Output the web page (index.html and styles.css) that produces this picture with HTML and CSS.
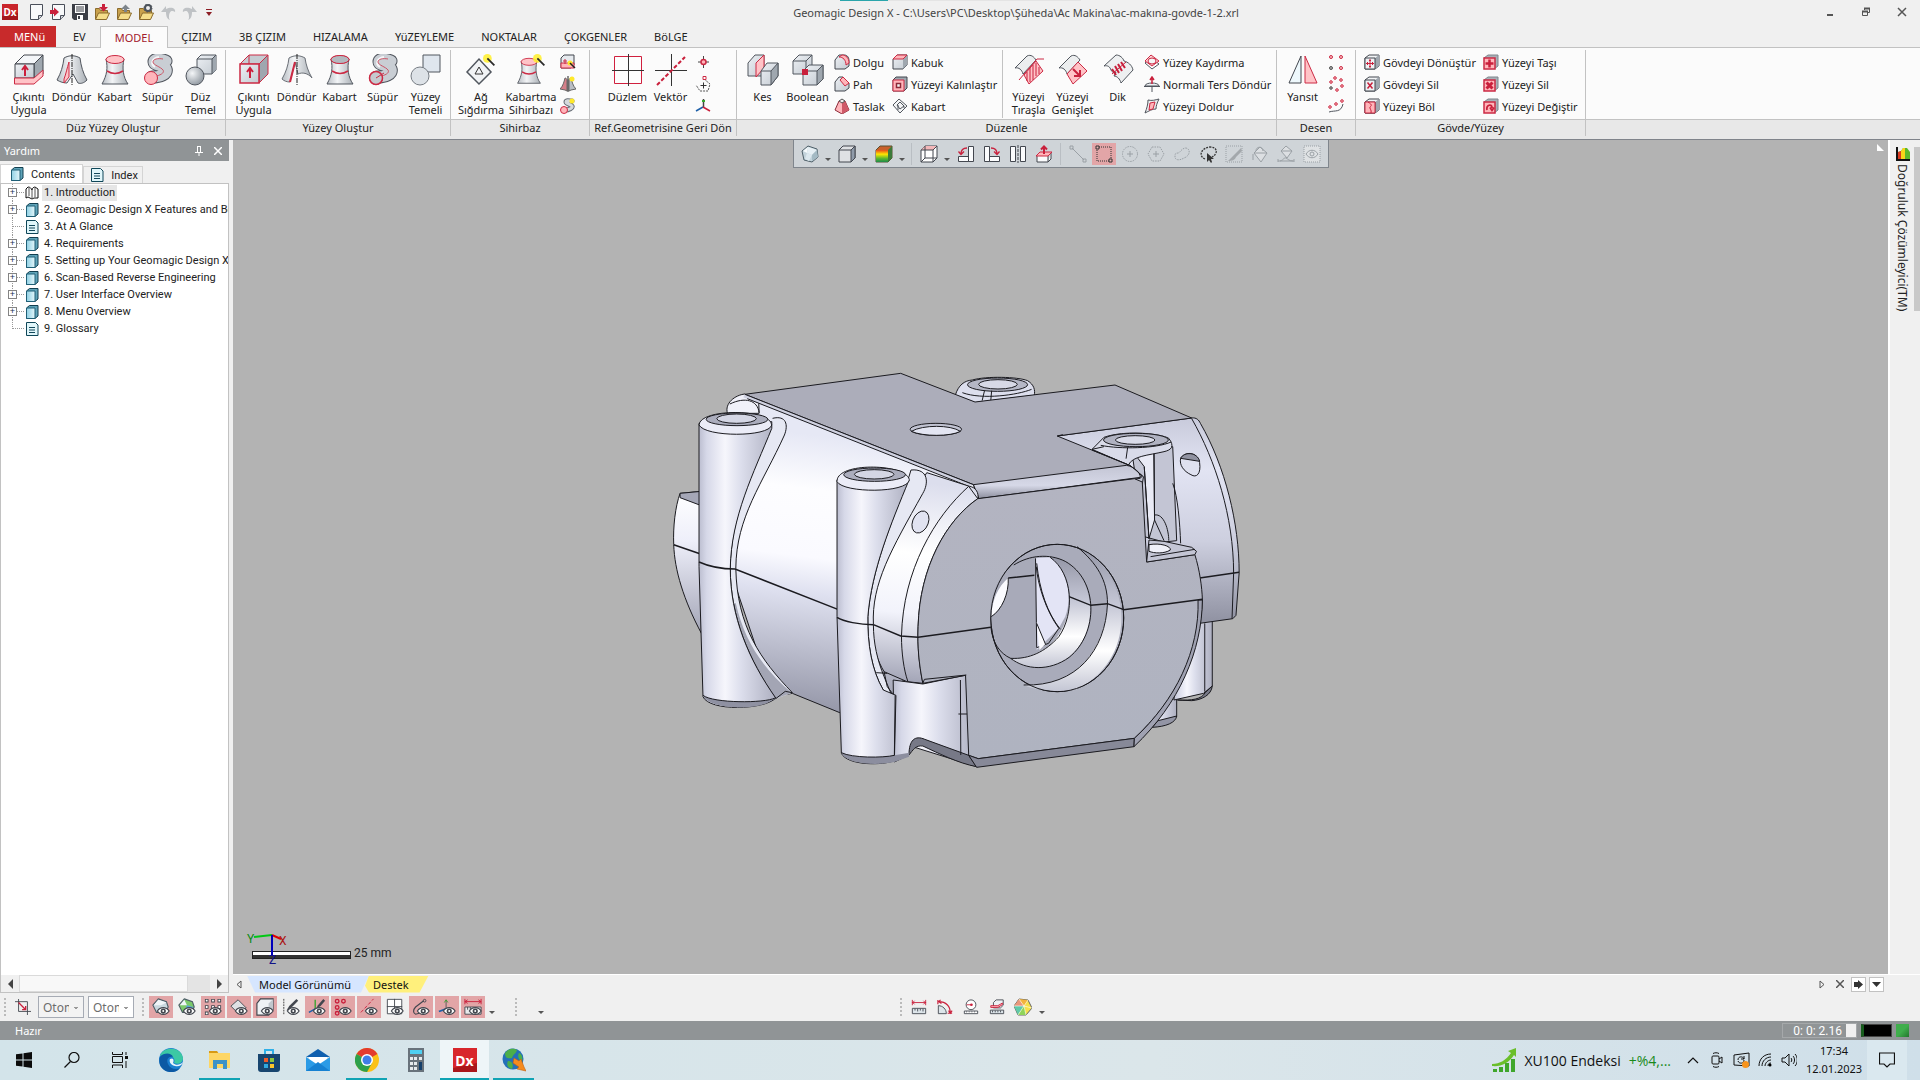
FILE: index.html
```
<!DOCTYPE html>
<html lang="tr">
<head>
  <meta charset="UTF-8" />
  <meta name="viewport" content="width=device-width, initial-scale=1.0" />
  <title>Geomagic Design X</title>
  <link rel="stylesheet" href="styles.css">
</head>
<body>

  <!-- icon sheet -->
  <svg class="sheet" aria-hidden="true">
    <defs>
      <linearGradient id="g-metal" x1="0" y1="0" x2="1" y2="0"><stop offset="0" stop-color="#b9bec4"/><stop offset=".4" stop-color="#f2f4f6"/><stop offset="1" stop-color="#a9afb5"/></linearGradient>
      <linearGradient id="g-face" x1="0" y1="0" x2="1" y2="1"><stop offset="0" stop-color="#eef1f5"/><stop offset="1" stop-color="#c3cad1"/></linearGradient>
      <linearGradient id="g-rain" x1="0" y1="0" x2="0" y2="1"><stop offset="0" stop-color="#e8481c"/><stop offset=".35" stop-color="#ffe600"/><stop offset=".7" stop-color="#5db82c"/><stop offset="1" stop-color="#1f8a4c"/></linearGradient>
      <radialGradient id="g-ball" cx=".35" cy=".35" r=".7"><stop offset="0" stop-color="#f4f6f8"/><stop offset="1" stop-color="#8f979f"/></radialGradient>
      <linearGradient id="g-book" x1="0" y1="0" x2="1" y2="0"><stop offset="0" stop-color="#8fd0e4"/><stop offset="1" stop-color="#e4f7fb"/></linearGradient>
    </defs>

    <symbol id="dx" viewBox="0 0 16 16"><path fill="#c9252b" d="M0 0h16v16H0z"/><path fill="#a5161c" d="M0 12l16-3v7H0z"/></symbol>
    <symbol id="page" viewBox="0 0 16 16"><path d="M2.500.5h12v11l-4 4h-8z" fill="#f8f9fa" stroke="#4a4f5a"/><path d="M14 11.500h-3.500v4" fill="#cfd3d8" stroke="#4a4f5a"/></symbol>
    <symbol id="page-in" viewBox="0 0 16 16"><use href="#page"/><path d="M0 6h4V3.500L9 8l-5 4.500V10H0z" fill="#c9203c"/></symbol>
    <symbol id="save" viewBox="0 0 16 16"><path d="M0 0h16v16H2l-2-2z" fill="#3b3e46"/><path fill="#fff" d="M3 1h10v8H3zM5 11h6v5H5z"/><path d="M4 3h8M4 5h8M4 7h8" stroke="#3b3e46"/><path fill="#3b3e46" d="M6 12h2v3H6z"/></symbol>
    <symbol id="folder" viewBox="0 0 16 16"><path d="M1.500 15V4.500h4l1 2h7V9" fill="#c9a14c" stroke="#8a6a2c"/><path d="M1.500 15.500L4.500 9h11l-3 6.500z" fill="#f5dd8a" stroke="#8a6a2c"/></symbol>
    <symbol id="folder-down" viewBox="0 0 16 16"><use href="#folder"/><path d="M8 0h3v3h3L9.500 7.500 5 3h3z" fill="#c9203c"/></symbol>
    <symbol id="folder-up" viewBox="0 0 16 16"><use href="#folder"/><path d="M8 8h3V5h3L9.500.5 5 5h3z" fill="#7d848b"/></symbol>
    <symbol id="folder-gear" viewBox="0 0 16 16"><use href="#folder"/><circle cx="10" cy="4" r="3" fill="none" stroke="#4d535b" stroke-width="2"/><circle cx="10" cy="4" r="4" fill="none" stroke="#4d535b" stroke-dasharray="1.500 1.600"/></symbol>
    <symbol id="undo" viewBox="0 0 16 16"><path d="M1 8l5-6v3c6-3 10 0 9 3-3-2-6-1-6 5 0 1 0 2 1 3-3-1-4-4-4-8z" fill="#bfc2c5"/></symbol>
    <symbol id="redo" viewBox="0 0 16 16"><path d="M15 8l-5-6v3C4 2 0 5 1 8c3-2 6-1 6 5 0 1 0 2-1 3 3-1 4-4 4-8z" fill="#bfc2c5"/></symbol>

    <!-- 32px ribbon icons -->
    <symbol id="extrude" viewBox="0 0 32 32"><path d="M2 10L11 1h19l-9 9z" fill="#f4f6f9" stroke="#43474f"/><path d="M21 10l9-9v19l-9 9z" fill="#9fa7af" stroke="#43474f"/><path d="M2 10h19v14H2z" fill="url(#g-face)" stroke="#43474f"/><path d="M1.500 24H21l9-8v6l-9 8H1.500z" fill="#ffc3c7" stroke="#cc2a44"/><path d="M12 22v-9M9 16l3-4 3 4" fill="none" stroke="#cc1f3c" stroke-width="2"/></symbol>
    <symbol id="extrude-s" viewBox="0 0 32 32"><path d="M2 10L11 1h19l-9 9z" fill="#c5ccd2" stroke="#cc2a44"/><path d="M11 1v9" stroke="#cc2a44"/><path d="M21 10l9-9v19l-9 9z" fill="#9fa7af" stroke="#cc2a44"/><path d="M2 10h19v19H2z" fill="url(#g-face)" stroke="#cc2a44" stroke-width="1.500"/><path d="M12 24v-9M9 18l3-4 3 4" fill="none" stroke="#cc1f3c" stroke-width="2"/></symbol>
    <symbol id="revolve" viewBox="0 0 32 32"><path d="M8 4c5-3 11-3 16 0 1 8 3 15 7 22-3 3-6 4-9 3l-5-9-6 9c-3 0-7-1-10-3 4-7 6-14 7-22z" fill="url(#g-metal)" stroke="#51565e"/><path d="M13 8v15l-5 6V25c2-5 3-11 5-17z" fill="#ffc3c7" stroke="#cc2a44"/><path d="M16 0v32" stroke="#222" stroke-dasharray="5 1 1 1"/></symbol>
    <symbol id="revolve-s" viewBox="0 0 32 32"><path d="M8 4c5-3 11-3 16 0 1 7 3 13 7 20-4-5-10-6-14-4l-3-12-5 20c-3 0-6-1-8-3 4-7 6-13 7-21z" fill="url(#g-metal)" stroke="#6a6f76"/><path d="M14 8L9 28" stroke="#cc2a44" stroke-width="2"/><path d="M16 0v32" stroke="#222" stroke-dasharray="5 1 1 1"/></symbol>
    <symbol id="loft" viewBox="0 0 32 32"><path d="M7 5c2 9 1 16-4 25h26c-5-7-6-16-4-25z" fill="url(#g-metal)" stroke="#51565e"/><path d="M8 17c5 3 11 3 16 0" fill="none" stroke="#cc2a44" stroke-width="1.500"/><ellipse cx="16" cy="5.500" rx="9" ry="4" fill="#ffc3c7" stroke="#cc2a44"/></symbol>
    <symbol id="loft-s" viewBox="0 0 32 32"><use href="#loft"/><ellipse cx="16" cy="5.500" rx="9" ry="4" fill="#b3b9bf" stroke="#cc2a44"/></symbol>
    <symbol id="sweep" viewBox="0 0 32 32"><path d="M10 23c8 0 16-3 14-8S12 12 12 8s7-3 12-1" fill="none" stroke="#51565e" stroke-width="13" stroke-linecap="round"/><path d="M10 23c8 0 16-3 14-8S12 12 12 8s7-3 12-1" fill="none" stroke="#c9ced4" stroke-width="11" stroke-linecap="round"/><path d="M13 13c-5-3-3-9 4-10" fill="none" stroke="#f4f6f8" stroke-width="2"/><path d="M9 23c9-1 14-4 12-7S11 11 11 8s5-4 10-3" fill="none" stroke="#cc5566"/><circle cx="9" cy="24" r="6.500" fill="#ffb5ba" stroke="#cc2a44"/></symbol>
    <symbol id="sweep-s" viewBox="0 0 32 32"><use href="#sweep"/><circle cx="9" cy="24" r="6.500" fill="#c5c9ce" stroke="#cc2a44" stroke-width="1.500"/><path d="M9 24l8-5" stroke="#cc2a44"/></symbol>
    <symbol id="solid" viewBox="0 0 32 32"><path d="M12 5l4-4h15v15l-4 4H12z" fill="url(#g-face)" stroke="#51565e"/><path d="M27 5l4-4v15l-4 4z" fill="#9fa7af"/><path d="M12 5h15v15M27 5l4-4" fill="none" stroke="#51565e"/><circle cx="10" cy="22" r="9" fill="url(#g-ball)" stroke="#51565e"/></symbol>
    <symbol id="surf" viewBox="0 0 32 32"><path d="M13 1h17v17H13z" fill="#dfe6ee" stroke="#51565e"/><circle cx="10" cy="22" r="9" fill="#dde2e7" stroke="#777d84"/></symbol>
    <symbol id="wand" viewBox="0 0 16 16"><circle cx="5" cy="5" r="5" fill="#fff02a" opacity=".85"/><path d="M5 5l8 8" stroke="#2b2b2b" stroke-width="2"/></symbol>
    <symbol id="meshfit" viewBox="0 0 32 32"><path d="M2 18L14 5l12 13-12 12z" fill="#f1f3f5" stroke="#51565e" stroke-width="1.500"/><path d="M14 13l4 7h-8z" fill="none" stroke="#333"/><use href="#wand" x="18" y="0" width="14" height="14"/></symbol>
    <symbol id="loftwiz" viewBox="0 0 32 32"><use href="#loft" y="2" width="28" height="30"/><use href="#wand" x="18" y="0" width="14" height="14"/></symbol>
    <symbol id="plane" viewBox="0 0 32 32"><path d="M2.500 2.500h27v27h-27z" fill="#fdfdfd" stroke="#d0203e"/><path d="M0 16.500h32M16.500 0v32" stroke="#333"/></symbol>
    <symbol id="vector" viewBox="0 0 32 32"><path d="M0 16.500h32M16.500 0v32" stroke="#333"/><path d="M2 31L30 3" stroke="#c9203c" stroke-width="2" stroke-dasharray="4 2"/></symbol>
    <symbol id="cut" viewBox="0 0 32 32"><path d="M1 9l7-8h9v21H1z" fill="url(#g-face)" stroke="#51565e"/><path d="M9 9l8-8v13l-8 9z" fill="#ffc3c7" stroke="#cc2a44"/><path d="M14 17l6-8h11v13l-7 9H14z" fill="url(#g-face)" stroke="#51565e"/><path d="M24 17l7-8v13l-7 9z" fill="#9fa7af" stroke="#51565e"/><path d="M14 17h10" stroke="#51565e"/></symbol>
    <symbol id="bool" viewBox="0 0 32 32"><path d="M1 7l6-6h13v14l-5 5H1z" fill="url(#g-face)" stroke="#51565e"/><path d="M1 7h13v13M14 7l6-6" fill="none" stroke="#51565e"/><path d="M11 17l6-6h14v14l-6 6H11z" fill="url(#g-face)" stroke="#51565e"/><path d="M25 17l6-6v14l-6 6z" fill="#9fa7af" stroke="#51565e"/><path d="M11 17h14" stroke="#51565e"/><path fill="#c9203c" d="M10 15h6v6h-6z"/></symbol>
    <symbol id="trim" viewBox="0 0 32 32"><path d="M2 14L14 2c4-2 7 1 9 4L10 20C9 16 6 13 2 14z" fill="#eceeef" stroke="#51565e"/><path d="M11 21L23 7l7 10-14 13z" fill="#ffc3c7" stroke="#cc2a44"/><path d="M14 18v9M17 14v14M20 11v15M23 9v13M26 13v7" stroke="#c9203c"/><path d="M6 26L24 5h7" fill="none" stroke="#cc2a44"/></symbol>
    <symbol id="extend" viewBox="0 0 32 32"><path d="M2 14L14 2c4-2 7 1 9 4L10 20C9 16 6 13 2 14z" fill="#eceeef" stroke="#51565e"/><path d="M10 20L21 8l9 9-14 13z" fill="#ffc3c7" stroke="#cc2a44"/><path d="M16 15l7 7M23 16v6h-6" fill="none" stroke="#c9203c" stroke-width="2"/></symbol>
    <symbol id="sew" viewBox="0 0 32 32"><path d="M2 12L14 1c4 0 7 3 8 6 4 1 8 4 9 9L19 29c-1-4-4-7-7-7l2-4c-3 1-4 0-5-2-1-3-3-5-7-4z" fill="#eef0f1" stroke="#51565e"/><path d="M10 15l4 6M13 12l4 7M16 10l4 7M19 8l4 6" stroke="#c9203c" stroke-width="2"/><path d="M10 20L24 8" stroke="#c9203c"/></symbol>
    <symbol id="mirror" viewBox="0 0 32 32"><path d="M14 2v27H2z" fill="#eef8fc" stroke="#43474f"/><path d="M18 2v27h12z" fill="#ffc3c7" stroke="#cc2a44"/></symbol>

    <!-- 16px icons -->
    <symbol id="s-ext" viewBox="0 0 16 16"><path d="M1 4l3-3h10v10l-3 3H1z" fill="#e6eaee" stroke="#43474f"/><path d="M1 9h13v5H1z" fill="#ffb5ba" stroke="#cc2a44"/><path d="M5 10V5M3 7h4" stroke="#cc2a44"/><circle cx="10" cy="9" r="2.500" fill="#ffe92a"/><path d="M10 9l5 5" stroke="#222" stroke-width="1.500"/></symbol>
    <symbol id="s-rev" viewBox="0 0 16 16"><path d="M5 2c1 0 2 1 2 2v11l-2-1-5-1c3-3 4-7 5-11z" fill="#d4808a" stroke="#666"/><path d="M11 2c-1 0-2 1-2 2v11l2-1 5-1c-3-3-4-7-5-11z" fill="#b9bec4" stroke="#666"/><path d="M8 0v16" stroke="#222"/><circle cx="12" cy="3" r="2.500" fill="#ffe92a"/></symbol>
    <symbol id="s-swp" viewBox="0 0 16 16"><path d="M5 12c4 0 8-2 7-4S6 6 6 4s4-1 6-1" fill="none" stroke="#6a7077" stroke-width="5" stroke-linecap="round"/><path d="M5 12c4 0 8-2 7-4S6 6 6 4s4-1 6-1" fill="none" stroke="#d5d9dd" stroke-width="3"/><circle cx="4" cy="12" r="3.500" fill="#ffb5ba" stroke="#cc2a44"/><circle cx="12" cy="3" r="2.500" fill="#ffe92a"/></symbol>
    <symbol id="s-pt" viewBox="0 0 16 16"><path d="M3 8h11M8.500 2v12" stroke="#444"/><circle cx="8.500" cy="8" r="2.500" fill="#ffb5ba" stroke="#cc2a44" stroke-width="1.500"/></symbol>
    <symbol id="s-poly" viewBox="0 0 16 16"><path d="M9 3l6 5-2 7H5L1 9" fill="none" stroke="#555" stroke-dasharray="2 1"/><path d="M5.500 9.500h6M8.500 6.500v6" stroke="#333"/><path d="M8 .5h3v3H8z" fill="#fff" stroke="#cc2a44"/></symbol>
    <symbol id="s-axis" viewBox="0 0 16 16"><path d="M8.500 9V1" stroke="#444" stroke-width="1.500"/><path d="M7 3h3" stroke="#36a52c" stroke-width="2"/><path d="M8 9l-7 4" stroke="#1d5fa8" stroke-width="1.500"/><path d="M8 9l7 4" stroke="#c9203c" stroke-width="1.500"/></symbol>
    <symbol id="s-fillet" viewBox="0 0 16 16"><path d="M1 6l4-5h5c4 0 5 3 5 6v5l-4 3H1z" fill="url(#g-face)" stroke="#43474f"/><path d="M5 3l3-2c4 0 7 3 7 8l-3 2c0-5-3-8-7-8z" fill="#ffb5ba" stroke="#cc2a44"/></symbol>
    <symbol id="s-chamfer" viewBox="0 0 16 16"><path d="M1 6l4-5h4l6 6v5l-4 3H1z" fill="url(#g-face)" stroke="#43474f"/><path d="M6 4l3-3 6 6-4 3z" fill="#ffb5ba" stroke="#cc2a44"/></symbol>
    <symbol id="s-draft" viewBox="0 0 16 16"><path d="M5 3h6l4 9-7 4-7-4z" fill="#ffb5ba" stroke="#8c2a38"/><path d="M8 5l3-2 4 9-7 4z" fill="#cf5a68"/><path d="M5 3l3-2 3 2-3 2z" fill="#eee" stroke="#555"/></symbol>
    <symbol id="s-shell" viewBox="0 0 16 16"><path d="M1 5l4-4h10v10l-4 4H1z" fill="url(#g-face)" stroke="#43474f"/><path d="M11 5l4-4v10l-4 4z" fill="#9fa7af"/><path d="M1 5l4-4h10l-4 4z" fill="#ffb5ba" stroke="#cc2a44"/></symbol>
    <symbol id="s-thick" viewBox="0 0 16 16"><path d="M1 4l3-3h11v11l-3 3H1z" fill="#9fa7af" stroke="#43474f"/><path d="M1 4h11v11H1z" fill="#ffb5ba" stroke="#cc2a44"/><path d="M4.500 7.500h4v4h-4z" fill="#f4f4f4" stroke="#8c2a38" stroke-width="1.500"/></symbol>
    <symbol id="s-emb" viewBox="0 0 16 16"><path d="M1 7l6-6 8 7-7 7z" fill="#f4f5f6" stroke="#51565e"/><path d="M5 7l3-3 4 4-4 3zM6 7v5M12 8v2" fill="none" stroke="#51565e"/></symbol>
    <symbol id="s-offset" viewBox="0 0 16 16"><path d="M1 9l6-5 8 6-7 5z" fill="#fff" stroke="#51565e"/><path d="M1 7l6-6 8 6-7 5z" fill="#ffd3d6" stroke="#cc2a44"/><ellipse cx="8" cy="7" rx="4" ry="3" fill="#f4f4f4" stroke="#cc2a44"/></symbol>
    <symbol id="s-normal" viewBox="0 0 16 16"><path d="M1 10c0-4 14-4 14 0z" fill="#eef1f4" stroke="#51565e"/><path d="M0 10.500h16M8 16v-6" stroke="#51565e"/><path d="M8 8V2M6 4l2-3 2 3" stroke="#c9203c" fill="none" stroke-width="1.500"/></symbol>
    <symbol id="s-fill" viewBox="0 0 16 16"><path d="M4 2c4 1 7 0 11-1-2 4-3 7-3 10-4 0-7 2-11 4 2-5 3-9 3-13z" fill="#eceeef" stroke="#51565e"/><path d="M6 5l5-1-2 7-4 1z" fill="#ffb5ba" stroke="#cc2a44"/></symbol>
    <symbol id="s-lin" viewBox="0 0 16 16"><g fill="#ffc3c7" stroke="#cc2a44"><circle cx="3" cy="3" r="1.500"/><circle cx="13" cy="3" r="1.500"/><circle cx="13" cy="14" r="1.500"/></g><circle cx="3" cy="14" r="1.500" fill="#aaa" stroke="#555"/></symbol>
    <symbol id="s-circ" viewBox="0 0 16 16"><g fill="#ffc3c7" stroke="#cc2a44"><circle cx="3" cy="6" r="1.300"/><circle cx="7" cy="2" r="1.300"/><circle cx="13" cy="4" r="1.300"/><circle cx="14" cy="10" r="1.300"/><circle cx="9" cy="14" r="1.300"/></g><circle cx="3" cy="12" r="1.300" fill="#aaa" stroke="#555"/></symbol>
    <symbol id="s-curve" viewBox="0 0 16 16"><path d="M1 14c6-2 12 1 14-8" fill="none" stroke="#51565e"/><g fill="#ffc3c7" stroke="#cc2a44"><circle cx="2" cy="9" r="1.300"/><circle cx="8" cy="6" r="1.300"/><circle cx="14" cy="3" r="1.300"/></g></symbol>
    <symbol id="b-box" viewBox="0 0 16 16"><path d="M1 4l4-3h10v11l-4 3H1z" fill="#f2f4f6" stroke="#43474f"/><path d="M11 4l4-3v11l-4 3z" fill="#9fa7af"/><path d="M1 4h10v11H1z" fill="#eef1f4" stroke="#43474f"/></symbol>
    <symbol id="b-pink" viewBox="0 0 16 16"><path d="M1 4l4-3h10v11l-4 3z" fill="#a9b0b7" stroke="#7e868d"/><path d="M1 4h11v11H1z" fill="#ffb5ba" stroke="#cc2a44" stroke-width="1.500"/></symbol>
    <symbol id="s-bmove" viewBox="0 0 16 16"><use href="#b-box"/><path d="M6 5v9M2 9.500h8M5 6.500h2M5 12.500h2M3.500 8v3M8.500 8v3" stroke="#c9203c"/></symbol>
    <symbol id="s-bdel" viewBox="0 0 16 16"><use href="#b-box"/><path d="M3.500 6.500l5 6M8.500 6.500l-5 6" stroke="#c9203c" stroke-width="1.500"/></symbol>
    <symbol id="s-split" viewBox="0 0 16 16"><use href="#b-box"/><path d="M1 4h10v11H1z" fill="#ffb5ba" stroke="#cc2a44"/><path d="M4 4c5 3 3 4 2 5s2 3 1 6" fill="none" stroke="#c9203c"/></symbol>
    <symbol id="s-fmove" viewBox="0 0 16 16"><use href="#b-pink"/><path d="M6.500 5.500v8M2.500 9.500h8" stroke="#c9203c" stroke-width="2.500"/></symbol>
    <symbol id="s-fdel" viewBox="0 0 16 16"><use href="#b-pink"/><path d="M3.500 6.500l6 6M9.500 6.500l-6 6" stroke="#c9203c" stroke-width="3"/></symbol>
    <symbol id="s-frep" viewBox="0 0 16 16"><use href="#b-pink"/><path d="M4 12c-1-5 5-7 5-2M7 9.500l2 3 2-3" fill="none" stroke="#c9203c" stroke-width="1.800"/></symbol>

    <!-- view bar -->
    <symbol id="v-poly" viewBox="0 0 18 18"><path d="M7 1l9 3 1 8-6 5-8-2-2-9z" fill="#c3d3db" stroke="#4e5f68"/><path d="M7 2l-1 6-4-2z" fill="#f6fafc"/><path d="M7 2l9 3-5 5-5-2z" fill="#e6eff4"/><path d="M6 8l5 2-3 6-4-2z" fill="#dce8ee"/><path d="M11 10l5-5 1 7-6 4z" fill="#a4bac4"/></symbol>
    <symbol id="v-cube" viewBox="0 0 18 18"><path d="M1 5l4-4h12v12l-4 4H1z" fill="#dfe1e4" stroke="#43474f"/><path d="M13 5l4-4v12l-4 4z" fill="#8f9baa" stroke="#43474f"/><path d="M1 5h12" stroke="#43474f"/></symbol>
    <symbol id="v-rain" viewBox="0 0 18 18"><path d="M1 5l4-4h12v12l-4 4H1z" fill="#c9602a" stroke="#5a5030"/><path d="M1 5h12v12H1z" fill="url(#g-rain)"/><path d="M13 5l4-4v12l-4 4z" fill="#3c7a3a"/></symbol>
    <symbol id="v-wire" viewBox="0 0 18 18"><path d="M1 5l4-4h12v12l-4 4H1z" fill="#fff" stroke="#43474f"/><path d="M1 5h12L17 1H5z" fill="#f3b7b9"/><path d="M1 5h12v12M13 5l4-4M5 1v12h12M5 13l-4 4" fill="none" stroke="#43474f"/></symbol>
    <symbol id="v-rotl" viewBox="0 0 18 18"><path d="M11.500 1.500h5v15h-5zM1.500 11.500h10v5h-10z" fill="#fbfcfd" stroke="#43474f"/><path d="M10 3C6 3 4 5 4 9M1.500 6.500L4 9.500l3-3" fill="none" stroke="#c9203c" stroke-width="1.300"/></symbol>
    <symbol id="v-rotr" viewBox="0 0 18 18"><path d="M1.500 1.500h5v15h-5zM6.500 11.500h10v5h-10z" fill="#fbfcfd" stroke="#43474f"/><path d="M8 3c4 0 6 2 6 6M11 6.500l3 3 2.500-3" fill="none" stroke="#c9203c" stroke-width="1.300"/></symbol>
    <symbol id="v-flip" viewBox="0 0 18 18"><path d="M1.500 1.500h5v15h-5zM11.500 1.500h5v15h-5z" fill="#fbfcfd" stroke="#43474f"/><path d="M9 0v18" stroke="#43474f" stroke-dasharray="3 1"/></symbol>
    <symbol id="v-up" viewBox="0 0 18 18"><path d="M2 11v6h11v-6M13 17l3-3V8" fill="#fbfcfd" stroke="#43474f"/><path d="M1 11l4-4h12l-4 4z" fill="#ffb5ba" stroke="#cc2a44"/><path d="M9 9V3M6 4.500l3-3 3 3" fill="none" stroke="#c9203c" stroke-width="2"/></symbol>
    <symbol id="v-line" viewBox="0 0 18 18"><path d="M3 3l12 12" stroke="#9aa0a5"/><path d="M1 1h3v3H1zM14 14h3v3h-3z" fill="none" stroke="#9aa0a5"/></symbol>
    <symbol id="v-rect" viewBox="0 0 18 18"><path d="M2 2h14v14H2z" fill="none" stroke="#333" stroke-dasharray="1 1"/><path d="M1 1h3v3H1zM14 14h3v3h-3z" fill="#e8b0b0" stroke="#333"/></symbol>
    <symbol id="v-circ" viewBox="0 0 18 18"><circle cx="9" cy="9" r="7.500" fill="none" stroke="#9aa0a5" stroke-dasharray="1.500 1"/><path d="M6 9h6M9 6v6" stroke="#9aa0a5"/></symbol>
    <symbol id="v-hex" viewBox="0 0 18 18"><path d="M5 2h8l4 7-4 7H5L1 9z" fill="none" stroke="#9aa0a5" stroke-dasharray="1.500 1"/><path d="M6 9h6M9 6v6" stroke="#9aa0a5"/></symbol>
    <symbol id="v-free" viewBox="0 0 18 18"><path d="M4 8c3 1 4-5 9-5 5 1 4 8-2 10-5 3-9 2-9-1 0-2 0-4 2-4z" fill="none" stroke="#9aa0a5" stroke-dasharray="1.500 1"/></symbol>
    <symbol id="v-lasso" viewBox="0 0 18 18"><path d="M6 14c-7-3-4-11 5-12 8 0 8 7 2 10" fill="none" stroke="#333" stroke-width="1.300" stroke-dasharray="2 1"/><path d="M8 8v9l2-2 2 3 1-1-1-3h3z" fill="#333"/></symbol>
    <symbol id="v-brush" viewBox="0 0 18 18"><path d="M1 1h16v16H1z" fill="none" stroke="#9aa0a5" stroke-dasharray="1 1"/><path d="M16 3L8 11l-5 5c4 0 7-1 8-4l6-6z" fill="#a3a8ac"/></symbol>
    <symbol id="v-fill" viewBox="0 0 18 18"><path d="M3 8l6-6 7 6-6 9z" fill="#dcdfe2" stroke="#9aa0a5"/><path d="M3 8h13M5 6c0-5 7-5 7 0M2 9v6" fill="none" stroke="#9aa0a5"/></symbol>
    <symbol id="v-fill2" viewBox="0 0 18 18"><path d="M4 6l5-5 6 5-5 7z" fill="#dcdfe2" stroke="#9aa0a5"/><path d="M4 6h11M1 16h16M3 16c4-1 4-4 6-3s3 3 7 3M1 14v3M17 14v3" fill="none" stroke="#9aa0a5"/></symbol>
    <symbol id="v-eye" viewBox="0 0 18 18"><path d="M1 1h16v16H1z" fill="#dfe2e4" stroke="#9aa0a5" stroke-dasharray="1 1"/><path d="M3 9c3-5 9-5 12 0-3 5-9 5-12 0z" fill="none" stroke="#9aa0a5"/><circle cx="9" cy="9" r="2" fill="none" stroke="#9aa0a5"/></symbol>

    <!-- visibility bar -->
    <symbol id="eye" viewBox="0 0 20 20"><path d="M6 14.500c3-5 10-5 13 0-3 5-10 5-13 0z" fill="#fff" stroke="#43474f" stroke-width="1.300"/><circle cx="12.500" cy="14.500" r="2" fill="#fff" stroke="#43474f" stroke-width="1.800"/></symbol>
    <symbol id="e-mesh" viewBox="0 0 20 20"><path d="M7 1l9 3 2 6-3 6H5L1 8z" fill="#c9d8df" stroke="#4e5f68" stroke-width="1.300"/><path d="M7 2l3 6-8 0zM10 8l6-3-9-3z" fill="#eff5f8"/><use href="#eye"/></symbol>
    <symbol id="e-reg" viewBox="0 0 20 20"><path d="M7 1l9 3 2 6-3 6H5L1 8z" fill="#7bc96a" stroke="#4e5f68" stroke-width="1.300"/><path d="M7 2l3 6-8 0z" fill="#eff5f8"/><path d="M10 8l7 2-3 5-6-2z" fill="#5aa2d8"/><use href="#eye"/></symbol>
    <symbol id="e-cloud" viewBox="0 0 20 20"><path d="M1 3h4M8 3h4M15 3h4M1 10h4M8 10h4M15 10h4M1 17h4" stroke="#43474f" stroke-width="4"/><path d="M2 3h2M9 3h2M16 3h2M2 10h2M9 10h2M16 10h2M2 17h2" stroke="#fff" stroke-width="2"/><use href="#eye"/></symbol>
    <symbol id="e-surf" viewBox="0 0 20 20"><path d="M1 9l8-7 9 9-9 6z" fill="#dfe1e4" stroke="#43474f"/><use href="#eye"/></symbol>
    <symbol id="e-body" viewBox="0 0 20 20"><path d="M1 6l4-5h14v12l-5 6H1z" fill="#eef1f4" stroke="#43474f" stroke-width="1.300"/><path d="M14 6l5-5v12l-5 6z" fill="#c1c7cd"/><use href="#eye"/></symbol>
    <symbol id="e-sk" viewBox="0 0 20 20"><path d="M2 1v18" stroke="#333" stroke-dasharray="2 1"/><path d="M16 1L8 9l-3 5 5-3 8-8z" fill="#43474f"/><use href="#eye"/></symbol>
    <symbol id="e-sk3" viewBox="0 0 20 20"><path d="M8 12V2" stroke="#36a52c" stroke-width="1.500"/><path d="M8 12l-7 4" stroke="#1d5fa8" stroke-width="1.500"/><path d="M17 1l-6 7-2 4 5-3 5-6z" fill="#43474f"/><use href="#eye"/></symbol>
    <symbol id="e-pt" viewBox="0 0 20 20"><g fill="none" stroke="#c9203c" stroke-width="1.500"><circle cx="3.500" cy="3.500" r="2"/><circle cx="10.500" cy="3.500" r="2"/><circle cx="3.500" cy="10.500" r="2"/><circle cx="3.500" cy="17" r="2"/></g><use href="#eye"/></symbol>
    <symbol id="e-line" viewBox="0 0 20 20"><path d="M1 16L15 1" stroke="#c9203c" stroke-dasharray="4 2"/><use href="#eye"/></symbol>
    <symbol id="e-plane" viewBox="0 0 20 20"><path d="M1.500 1.500h16v16h-16zM9.500 1v17M1 9.500h17" fill="#fff" stroke="#43474f"/><use href="#eye"/></symbol>
    <symbol id="e-curve" viewBox="0 0 20 20"><path d="M13 3L4 10c-3 3-3 7 0 8l4-1" fill="none" stroke="#43474f" stroke-width="1.300"/><circle cx="14" cy="3" r="1.500" fill="none" stroke="#43474f"/><use href="#eye"/></symbol>
    <symbol id="e-ax" viewBox="0 0 20 20"><path d="M9 12V2" stroke="#555"/><path d="M7 5l2-3 2 3" stroke="#36a52c" fill="none"/><path d="M9 12l-8 3" stroke="#1d5fa8" stroke-width="2"/><use href="#eye"/></symbol>
    <symbol id="e-dim" viewBox="0 0 20 20"><path d="M1 4h18M1 1v6M19 1v6M4 2L1 4l3 2M16 2l3 2-3 2" fill="none" stroke="#c9203c"/><path d="M1 10h18v8H1z" fill="#e8eaec" stroke="#43474f"/><path d="M4 10v3M7 10v3" stroke="#43474f"/><use href="#eye"/></symbol>
    <symbol id="m-fit" viewBox="0 0 18 18"><path d="M4 0v14h14M0 3h14v15" fill="none" stroke="#43474f"/><path d="M4 4l8 8M12 8v4H8" fill="none" stroke="#c9203c" stroke-width="1.500"/></symbol>
    <symbol id="m-dim" viewBox="0 0 18 18"><path d="M1 4h16M1.500 1v6M16.500 1v6M4 2L2 4l2 2M14 2l2 2-2 2" fill="none" stroke="#c9203c"/><path d="M1.500 10.500h15v6h-15z" fill="#dde5ea" stroke="#43474f"/><path d="M4.500 11v2M7.500 11v3M10.500 11v2M13.500 11v3" stroke="#43474f"/></symbol>
    <symbol id="m-ang" viewBox="0 0 18 18"><path d="M1.500 16.500v-9c5 0 9 4 9 9z" fill="#dde5ea" stroke="#43474f"/><path d="M2 3c8 0 13 5 13 13M1 1v5M4 1L2 3l3 2M12 16h5M13 13l2 3 2-3" fill="none" stroke="#c9203c" stroke-width="1.300"/></symbol>
    <symbol id="m-rad" viewBox="0 0 18 18"><circle cx="9" cy="6.500" r="5.500" fill="#fff" stroke="#43474f"/><path d="M4 6.500h5" stroke="#c9203c"/><circle cx="9.500" cy="6.500" r="1.500" fill="#c9203c"/><path d="M1.500 13.500h15v3h-15z" fill="#fff" stroke="#43474f"/><path d="M4 14v1M7 14v1M10 14v1M13 14v1" stroke="#43474f"/></symbol>
    <symbol id="m-sec" viewBox="0 0 18 18"><path d="M5 4l3-3h8v6l-3 3H5z" fill="#eef1f4" stroke="#43474f"/><path d="M2 7.500h8l5-3v2l-5 3H2z" fill="#ffb5ba" stroke="#c9203c"/><path d="M1.500 12.500h15v4h-15z" fill="#dde5ea" stroke="#43474f"/><path d="M4 13v2M7 13v2M10 13v2M13 13v2" stroke="#43474f"/></symbol>
    <symbol id="m-dev" viewBox="0 0 18 18"><path d="M5 1l9 1 4 8-6 7H4L0 8z" fill="#f6e04a" stroke="#666"/><path d="M5 1l5 7-10 0z" fill="#e9967a"/><path d="M5 1l9 1-4 6z" fill="#f3b33c"/><path d="M0 8h10l-6 9z" fill="#5fc9a8"/><path d="M4 17l6-9 2 9z" fill="#8fd45a"/><path d="M5 1l5 7 4-6M0 8h10l8 2M4 17l6-9 2 9" fill="none" stroke="#fff" stroke-width=".6"/></symbol>

    <!-- help tree -->
    <symbol id="t-book" viewBox="0 0 14 14"><path d="M1.500 3l3-2.500h8.500V11l-3 2.500H1.500z" fill="#5fa3b8" stroke="#123f50"/><path d="M1.500 3H10v10.500H1.500z" fill="url(#g-book)" stroke="#1f5f76"/></symbol>
    <symbol id="t-open" viewBox="0 0 14 14"><path d="M1 3l2-2c2 0 3 1 4 3 0-2 2-3 3-3l3 2v9H9l-2 1-2-1-2-1-2 1z" fill="#fff" stroke="#111"/><path d="M7 4v9M4 2v8M10 2v9" stroke="#555"/></symbol>
    <symbol id="t-page" viewBox="0 0 14 14"><path d="M1.500.5h9l2.500 2.500v10.500H1.500z" fill="#e0f6fa" stroke="#0f4658"/><path d="M4 5.500h6M4 8h6M4 10.500h6" stroke="#12475a"/></symbol>

    <!-- taskbar -->
    <symbol id="k-win" viewBox="0 0 16 16"><path d="M0 2.300L6.500 1.400v6.100H0zM7.500 1.200L16 0v7.500H7.500zM0 8.500h6.500v6.100L0 13.700zM7.500 8.500H16V16l-8.500-1.200z" fill="#0b0b0b"/></symbol>
    <symbol id="k-search" viewBox="0 0 16 16"><circle cx="10" cy="5.500" r="5" fill="none" stroke="#111" stroke-width="1.200"/><path d="M6.500 9.500L.5 15.500" stroke="#111" stroke-width="1.200"/></symbol>
    <symbol id="k-task" viewBox="0 0 16 16"><path d="M.5 4.500h10v6H.5zM.5 0v2.500h10V0M.5 16v-3h10v3M14 0v3M14 9v7" fill="none" stroke="#111"/><path fill="#111" d="M13 4h3v3h-3z"/></symbol>
    <symbol id="k-edge" viewBox="0 0 24 24"><circle cx="12" cy="12" r="12" fill="#1a7fd0"/><path d="M1 8C4-2 22-2 24 10c0 5-5 7-9 5 2-4-2-8-6-8-4 0-7 1-8 1z" fill="#3cc8a4"/><path d="M1 9c4-5 12-4 13 0-5-1-7 3-5 7 2 5 8 6 12 4-4 6-14 5-18 0C0 17 0 12 1 9z" fill="#0c59a4"/><path d="M11 11c4-2 4 2 3 4 3 3 7 2 10-1-1 4-5 5-8 4-5-1-6-5-5-7z" fill="#e8f4fa"/></symbol>
    <symbol id="k-files" viewBox="0 0 24 24"><path d="M1 3h8l2 3H1z" fill="#d79a14"/><path d="M1 5h21v15H1z" fill="#fdd665"/><path d="M5 21v-9h14v9h-4v-5H9v5z" fill="#3d93c8"/></symbol>
    <symbol id="k-store" viewBox="0 0 24 24"><path d="M8 6V2h8v4" fill="none" stroke="#2fb0e8" stroke-width="2"/><path d="M1 6h22v15a3 3 0 0 1-3 3H4a3 3 0 0 1-3-3z" fill="#17456f"/><path fill="#f05a28" d="M7 10h4v4H7z"/><path fill="#8cc63f" d="M13 10h4v4h-4z"/><path fill="#2fa8e0" d="M7 16h4v4H7z"/><path fill="#fdc52c" d="M13 16h4v4h-4z"/></symbol>
    <symbol id="k-mail" viewBox="0 0 24 24"><path d="M0 9l12-8 12 8z" fill="#0f5fae"/><path d="M3 9h18v8H3z" fill="#fff"/><path d="M0 9l12 8 12-8v14H0z" fill="#2b9be6"/><path d="M0 23l12-9 12 9z" fill="#1681d2"/></symbol>
    <symbol id="k-chrome" viewBox="0 0 24 24"><circle cx="12" cy="12" r="12" fill="#fbc116"/><path d="M12 12L1.600 6A12 12 0 0 1 22.400 6z" fill="#e33b2e"/><path d="M12 12L1.600 6A12 12 0 0 0 12 24l5-9z" fill="#2da04c"/><circle cx="12" cy="12" r="6" fill="#fff"/><circle cx="12" cy="12" r="4.500" fill="#3f7de8"/></symbol>
    <symbol id="k-calc" viewBox="0 0 24 24"><path d="M4 0h16v24H4z" fill="#68727b"/><path d="M6 2h12v4H6z" fill="#4fd0f2"/><path d="M6 9h3v3H6zM10 9h3v3h-3zM15 9h3v3h-3zM6 14h3v3H6zM10 14h3v3h-3zM6 19h3v3H6zM10 19h3v3h-3z" fill="#e6eaed"/><path d="M15 14h3v8h-3z" fill="#15406b"/></symbol>
    <symbol id="k-dx" viewBox="0 0 24 24"><path fill="#d8262c" d="M0 0h24v24H0z"/><path fill="#ab171c" d="M0 20L24 15v9H0z"/></symbol>
    <symbol id="k-globe" viewBox="0 0 24 24"><circle cx="11" cy="11" r="10.500" fill="#2470b8"/><path d="M3 5c4-5 9-5 12-3-1 4-4 4-5 8-4 1-7 0-7-5zM6 13c4 0 6 3 4 8-4-1-6-4-4-8zM17 5c3 1 4 5 3 8-3 0-5-5-3-8z" fill="#4cae4a"/><path d="M12 10l5 3 2-2 3 8 2 4-9-2 2-2-6-4z" fill="#f58b1f" stroke="#c4600c" stroke-width=".6"/></symbol>
    <symbol id="k-stock" viewBox="0 0 24 24"><path d="M1 21h4v3H1zM7 19h4v5H7zM13 15h4v9h-4zM19 11h4v13h-4z" fill="#3fa62b"/><path d="M0 16C8 16 14 12 19 5l-3-2 8-3v9l-2-2C17 15 9 19 0 18z" fill="#6abf2a"/></symbol>
  </svg>

  <div class="app">
    <header class="titlebar">
      <div class="quick">
        <span class="dx-logo"><svg class="i16"><use href="#dx"/></svg><b>Dx</b></span>
        <button aria-label="Yeni"><svg class="i16"><use href="#page"/></svg></button>
        <button aria-label="Al"><svg class="i16"><use href="#page-in"/></svg></button>
        <button aria-label="Kaydet"><svg class="i16"><use href="#save"/></svg></button>
        <button aria-label="Aç"><svg class="i16"><use href="#folder-down"/></svg></button>
        <button aria-label="Ver"><svg class="i16"><use href="#folder-up"/></svg></button>
        <button aria-label="Ayar"><svg class="i16"><use href="#folder-gear"/></svg></button>
        <button aria-label="Geri"><svg class="i16"><use href="#undo"/></svg></button>
        <button aria-label="Yinele"><svg class="i16"><use href="#redo"/></svg></button>
        <button class="more" aria-label="Diğer"><svg width="6" height="7" viewBox="0 0 6 7"><path d="M0 .5h6" stroke="#8c1d24"/><path d="M0 3h6L3 7z" fill="#8c1d24"/></svg></button>
      </div>
      <h1>Geomagic Design X - C:\Users\PC\Desktop\Şüheda\Ac Makina\ac-makına-govde-1-2.xrl</h1>
      <div class="win-buttons">
        <button aria-label="Küçült"><svg width="10" height="10"><path d="M2 8h6" stroke="#555" stroke-width="2"/></svg></button>
        <button aria-label="Geri yükle"><svg width="10" height="10"><path d="M3.500 3V1.500h5v4H7M1.500 4.500h5v4h-5z" fill="none" stroke="#555"/><path d="M3 1.500h6M1 4.500h6" stroke="#555" stroke-width="2"/></svg></button>
        <button aria-label="Kapat"><svg width="10" height="10"><path d="M1 1l8 8M9 1L1 9" stroke="#555" stroke-width="1.500"/></svg></button>
      </div>
      <span class="loading"><i></i></span>
    </header>

    <nav class="tabs">
      <button class="menu">MENü</button>
      <button>EV</button>
      <button class="active">MODEL</button>
      <button>ÇIZIM</button>
      <button>3B ÇIZIM</button>
      <button>HIZALAMA</button>
      <button>YüZEYLEME</button>
      <button>NOKTALAR</button>
      <button>ÇOKGENLER</button>
      <button>BöLGE</button>
    </nav>

    <div class="ribbon">
      <section class="group five">
        <div class="tools">
          <button class="big"><svg><use href="#extrude"/></svg>Çıkıntı<br>Uygula</button>
          <button class="big"><svg><use href="#revolve"/></svg>Döndür</button>
          <button class="big"><svg><use href="#loft"/></svg>Kabart</button>
          <button class="big"><svg><use href="#sweep"/></svg>Süpür</button>
          <button class="big"><svg><use href="#solid"/></svg>Düz<br>Temel</button>
        </div>
        <h2>Düz Yüzey Oluştur</h2>
      </section>
      <section class="group five">
        <div class="tools">
          <button class="big"><svg><use href="#extrude-s"/></svg>Çıkıntı<br>Uygula</button>
          <button class="big"><svg><use href="#revolve-s"/></svg>Döndür</button>
          <button class="big"><svg><use href="#loft-s"/></svg>Kabart</button>
          <button class="big"><svg><use href="#sweep-s"/></svg>Süpür</button>
          <button class="big"><svg><use href="#surf"/></svg>Yüzey<br>Temeli</button>
        </div>
        <h2>Yüzey Oluştur</h2>
      </section>
      <section class="group wizard">
        <div class="tools">
          <button class="big wide"><svg><use href="#meshfit"/></svg>Ağ<br>Sığdırma</button>
          <button class="big wide"><svg><use href="#loftwiz"/></svg>Kabartma<br>Sihirbazı</button>
          <div class="smalls">
            <button aria-label="Çıkıntı sihirbazı"><svg><use href="#s-ext"/></svg></button>
            <button aria-label="Döndür sihirbazı"><svg><use href="#s-rev"/></svg></button>
            <button aria-label="Süpür sihirbazı"><svg><use href="#s-swp"/></svg></button>
          </div>
        </div>
        <h2>Sihirbaz</h2>
      </section>
      <section class="group refgeo">
        <div class="tools">
          <button class="big"><svg><use href="#plane"/></svg>Düzlem</button>
          <button class="big"><svg><use href="#vector"/></svg>Vektör</button>
          <div class="smalls">
            <button aria-label="Nokta"><svg><use href="#s-pt"/></svg></button>
            <button aria-label="Çoklu çizgi"><svg><use href="#s-poly"/></svg></button>
            <button aria-label="Koordinat"><svg><use href="#s-axis"/></svg></button>
          </div>
        </div>
        <h2>Ref.Geometrisine Geri Dön</h2>
      </section>
      <section class="group edit">
        <div class="tools">
          <button class="big"><svg><use href="#cut"/></svg>Kes</button>
          <button class="big"><svg><use href="#bool"/></svg>Boolean</button>
          <div class="smalls col-a">
            <button><svg><use href="#s-fillet"/></svg>Dolgu</button>
            <button><svg><use href="#s-chamfer"/></svg>Pah</button>
            <button><svg><use href="#s-draft"/></svg>Taslak</button>
          </div>
          <div class="smalls col-b">
            <button><svg><use href="#s-shell"/></svg>Kabuk</button>
            <button><svg><use href="#s-thick"/></svg>Yüzeyi Kalınlaştır</button>
            <button><svg><use href="#s-emb"/></svg>Kabart</button>
          </div>
          <button class="big sep"><svg><use href="#trim"/></svg>Yüzeyi<br>Tıraşla</button>
          <button class="big"><svg><use href="#extend"/></svg>Yüzeyi<br>Genişlet</button>
          <button class="big"><svg><use href="#sew"/></svg>Dik</button>
          <div class="smalls">
            <button><svg><use href="#s-offset"/></svg>Yüzey Kaydırma</button>
            <button><svg><use href="#s-normal"/></svg>Normali Ters Döndür</button>
            <button><svg><use href="#s-fill"/></svg>Yüzeyi Doldur</button>
          </div>
        </div>
        <h2>Düzenle</h2>
      </section>
      <section class="group pattern">
        <div class="tools">
          <button class="big"><svg><use href="#mirror"/></svg>Yansıt</button>
          <div class="smalls">
            <button aria-label="Doğrusal desen"><svg><use href="#s-lin"/></svg></button>
            <button aria-label="Dairesel desen"><svg><use href="#s-circ"/></svg></button>
            <button aria-label="Eğri deseni"><svg><use href="#s-curve"/></svg></button>
          </div>
        </div>
        <h2>Desen</h2>
      </section>
      <section class="group bodyface">
        <div class="tools">
          <div class="smalls col-c">
            <button><svg><use href="#s-bmove"/></svg>Gövdeyi Dönüştür</button>
            <button><svg><use href="#s-bdel"/></svg>Gövdeyi Sil</button>
            <button><svg><use href="#s-split"/></svg>Yüzeyi Böl</button>
          </div>
          <div class="smalls">
            <button><svg><use href="#s-fmove"/></svg>Yüzeyi Taşı</button>
            <button><svg><use href="#s-fdel"/></svg>Yüzeyi Sil</button>
            <button><svg><use href="#s-frep"/></svg>Yüzeyi Değiştir</button>
          </div>
        </div>
        <h2>Gövde/Yüzey</h2>
      </section>
    </div>

    <div class="work">
      <aside class="help">
        <div class="help-title">
          <span>Yardım</span>
          <button aria-label="Sabitle"><svg width="8" height="10"><path d="M2.500 0v6M5.500 0v6M2 .5h4M0 6.500h8M4 7v3" stroke="#fff" fill="none"/></svg></button>
          <button aria-label="Kapat"><svg width="8" height="8"><path d="M0 0l8 8M8 0L0 8" stroke="#fff" stroke-width="1.500"/></svg></button>
        </div>
        <div class="help-tabs">
          <button class="on"><svg class="i14"><use href="#t-book"/></svg>Contents</button>
          <button><svg class="i14"><use href="#t-page"/></svg>Index</button>
        </div>
        <ul class="tree">
          <li class="open"><i>+</i><svg class="i14"><use href="#t-open"/></svg><a href="#">1. Introduction</a></li>
          <li><i>+</i><svg class="i14"><use href="#t-book"/></svg><a href="#">2. Geomagic Design X Features and Benefits</a></li>
          <li class="leaf"><svg class="i14"><use href="#t-page"/></svg><a href="#">3. At A Glance</a></li>
          <li><i>+</i><svg class="i14"><use href="#t-book"/></svg><a href="#">4. Requirements</a></li>
          <li><i>+</i><svg class="i14"><use href="#t-book"/></svg><a href="#">5. Setting up Your Geomagic Design X</a></li>
          <li><i>+</i><svg class="i14"><use href="#t-book"/></svg><a href="#">6. Scan-Based Reverse Engineering</a></li>
          <li><i>+</i><svg class="i14"><use href="#t-book"/></svg><a href="#">7. User Interface Overview</a></li>
          <li><i>+</i><svg class="i14"><use href="#t-book"/></svg><a href="#">8. Menu Overview</a></li>
          <li class="leaf"><svg class="i14"><use href="#t-page"/></svg><a href="#">9. Glossary</a></li>
        </ul>
        <div class="hscroll">
          <button aria-label="Sola"><svg width="5" height="10"><path d="M5 0v10L0 5z" fill="#444"/></svg></button>
          <span class="thumb"></span>
          <span class="track"></span>
          <button aria-label="Sağa"><svg width="5" height="10"><path d="M0 0v10l5-5z" fill="#444"/></svg></button>
        </div>
      </aside>

      <main class="stage">
        <div class="stage-row">
          <div class="viewport">
            <div class="viewbar">
              <button aria-label="Ağ"><svg class="i18"><use href="#v-poly"/></svg></button><button class="drop" aria-label="Ağ seçenekleri"></button>
              <button aria-label="Gövde"><svg class="i18"><use href="#v-cube"/></svg></button><button class="drop" aria-label="Gövde seçenekleri"></button>
              <button aria-label="Sapma"><svg class="i18"><use href="#v-rain"/></svg></button><button class="drop" aria-label="Sapma seçenekleri"></button>
              <span class="bar"></span>
              <button aria-label="Görünüm"><svg class="i18"><use href="#v-wire"/></svg></button><button class="drop" aria-label="Görünüm seçenekleri"></button>
              <button aria-label="Sola döndür"><svg class="i18"><use href="#v-rotl"/></svg></button>
              <button aria-label="Sağa döndür"><svg class="i18"><use href="#v-rotr"/></svg></button>
              <button aria-label="Çevir"><svg class="i18"><use href="#v-flip"/></svg></button>
              <button aria-label="Dik bak"><svg class="i18"><use href="#v-up"/></svg></button>
              <span class="bar"></span>
              <button aria-label="Çizgi"><svg class="i18"><use href="#v-line"/></svg></button>
              <button class="on" aria-label="Dikdörtgen"><svg class="i18"><use href="#v-rect"/></svg></button>
              <button aria-label="Daire"><svg class="i18"><use href="#v-circ"/></svg></button>
              <button aria-label="Çokgen"><svg class="i18"><use href="#v-hex"/></svg></button>
              <button aria-label="Serbest"><svg class="i18"><use href="#v-free"/></svg></button>
              <button aria-label="Kement"><svg class="i18"><use href="#v-lasso"/></svg></button>
              <button aria-label="Fırça"><svg class="i18"><use href="#v-brush"/></svg></button>
              <button aria-label="Dolgu"><svg class="i18"><use href="#v-fill"/></svg></button>
              <button aria-label="Genişlet"><svg class="i18"><use href="#v-fill2"/></svg></button>
              <button aria-label="Görünenler"><svg class="i18"><use href="#v-eye"/></svg></button>
            </div>
            <svg class="corner" width="7" height="7"><path d="M0 0v7h7z" fill="#fff"/></svg>

            <!-- pump housing -->
            <svg class="part" viewBox="0 0 1568 1320" preserveAspectRatio="none">
              <defs>
                <linearGradient id="p-post" x1="0" x2="1" y1="0" y2="0"><stop offset="0" stop-color="#bcbed0"/><stop offset=".1" stop-color="#d6d8e8"/><stop offset=".34" stop-color="#f6f6fc"/><stop offset=".55" stop-color="#dcdeec"/><stop offset="1" stop-color="#adafc0"/></linearGradient>
                <linearGradient id="p-barrel" gradientUnits="userSpaceOnUse" x1="450" y1="260" x2="330" y2="1060"><stop offset="0" stop-color="#e6e8f5"/><stop offset=".2" stop-color="#fdfdff"/><stop offset=".45" stop-color="#fafaff"/><stop offset=".58" stop-color="#dfe1f0"/><stop offset="1" stop-color="#9799aa"/></linearGradient>
                <linearGradient id="p-flange" x1="0" x2="0" y1="0" y2="1"><stop offset="0" stop-color="#c8cadb"/><stop offset=".25" stop-color="#e2e4f3"/><stop offset=".6" stop-color="#cdcfdf"/><stop offset="1" stop-color="#8f91a1"/></linearGradient>
                <linearGradient id="p-ear" x1="0" x2="0" y1="0" y2="1"><stop offset="0" stop-color="#fff"/><stop offset=".35" stop-color="#eeeffa"/><stop offset="1" stop-color="#a3a5b6"/></linearGradient>
                <linearGradient id="p-rim" gradientUnits="userSpaceOnUse" x1="700" y1="400" x2="640" y2="1000"><stop offset="0" stop-color="#dcdeed"/><stop offset=".35" stop-color="#fff"/><stop offset=".65" stop-color="#f2f3fb"/><stop offset="1" stop-color="#a1a3b5"/></linearGradient>
                <linearGradient id="p-bore" x1="0" x2="0" y1="0" y2="1"><stop offset="0" stop-color="#9496a6"/><stop offset=".4" stop-color="#c5c7d6"/><stop offset=".72" stop-color="#fff"/><stop offset="1" stop-color="#c4c6d4"/></linearGradient>
                <linearGradient id="p-edge" x1="0" x2="0" y1="0" y2="1"><stop offset="0" stop-color="#c3c5d4"/><stop offset=".6" stop-color="#d6d8e7"/><stop offset="1" stop-color="#8b8d9c"/></linearGradient>
                <linearGradient id="p-front" x1="0" x2="0" y1="0" y2="1"><stop offset="0" stop-color="#b3b4c1"/><stop offset="1" stop-color="#afb3c0"/></linearGradient>
              </defs>

              <!-- rear parts -->
              <g class="ink">
                <path d="M76 430L130 424V850C85 750 62 660 60 584C58 530 64 470 76 430z" fill="url(#p-ear)"/>
                <path d="M76 430L130 424V467L76 443z" fill="#a5a7b7"/>
                <path class="seam" d="M60 584L128 612"/>
                <path d="M772 136C780 105 795 92 815 90C850 78 930 80 955 92C972 105 974 120 972 136L822 158z" fill="url(#p-rim)"/>
                <ellipse cx="879" cy="104" rx="76" ry="20" fill="#b5b7c6"/>
                <ellipse cx="880" cy="103" rx="49" ry="14" fill="#d7d9e6"/>
                <path d="M790 128C840 150 930 135 965 118M846 122L840 152M864 122L862 150" fill="none"/>
                <path d="M1250 1130L1332 1100V1000H1260z" fill="url(#p-post)"/>
                <path d="M1270 1132C1305 1130 1330 1118 1332 1098L1285 1112z" fill="#9395a5"/>
                <path d="M1325 1050L1400 1030L1422 1008V790H1340z" fill="url(#p-post)"/>
                <path d="M1334 1050C1370 1052 1395 1048 1404 1028L1422 1008C1420 1035 1395 1050 1370 1052z" fill="#777988"/>
                <path d="M1403 820V1025" fill="none"/>
                <path d="M1030 258L1370 204C1382 202 1388 210 1392 220C1455 350 1490 520 1490 668L1482 796L1474 806L1390 820L1240 640z" fill="url(#p-flange)"/>
                <path d="M1370 206C1430 330 1476 500 1476 670L1472 806" fill="none"/>
                <path class="seam" d="M1390 684L1490 667"/>
                <path d="M1342 325C1355 302 1385 306 1390 338C1394 372 1382 385 1368 374C1350 364 1338 345 1342 325z" fill="#dfe1ef"/>
                <path d="M1342 325C1350 304 1385 306 1390 334z" fill="#8f91a0"/>
              </g>

              <!-- rear right post -->
              <g class="ink">
                <path d="M1218 300L1322 290L1332 572L1300 576L1250 560z" fill="#c3c5d4"/>
                <path d="M1218 300L1274 296L1276 510L1262 566L1250 350z" fill="#e9eaf5"/>
                <path d="M1275 310L1276 510M1250 350L1262 566M1322 400C1335 440 1340 520 1342 580M1276 495C1300 490 1312 540 1312 572M1276 510L1300 572" fill="none"/>
                <path d="M1118 298L1148 262C1200 240 1290 250 1312 265C1328 290 1318 300 1300 305C1260 316 1220 318 1210 345z" fill="#d9dbe9"/>
                <ellipse cx="1229" cy="270" rx="82" ry="20" fill="#b0b2c1"/>
                <ellipse cx="1227" cy="270" rx="50" ry="13" fill="#d9dbe8"/>
                <path d="M1140 286C1190 298 1280 296 1318 276M1118 298L1148 290M1208 292L1204 326" fill="none"/>
              </g>

              <!-- barrel -->
              <path class="ink" d="M236 134L824 406L690 640L640 860L640 1000L620 1150L480 1088L360 1030L310 1040L200 650L150 300z" fill="url(#p-barrel)"/>
              <path class="ink" d="M196 190C188 160 215 135 240 132L275 160L276 190z" fill="#f0f1f9"/>
              <path class="ink" d="M202 162C240 140 272 150 276 188" fill="none"/>

              <!-- top -->
              <path class="ink" d="M240 133L634 70L822 156L1176 105L1370 204L1030 258L1215 347L1245 378L1240 385L830 445L818 404z" fill="#acadba"/>
              <path class="ink" d="M818 404L1205 346C1225 350 1240 368 1240 382L832 446z" fill="url(#p-edge)"/>
              <path d="M240 133L818 404L808 408L236 142z" fill="#cfd1e0"/>
              <path class="ink" d="M240 133L818 404M246 146L806 409M1030 258L1044 254M1118 300L1215 347L1248 380L1245 402" fill="none"/>
              <ellipse class="ink" cx="723" cy="238" rx="65" ry="18" fill="#c1c3d2"/>
              <path class="ink" d="M661 244C690 224 760 224 785 244C760 260 690 260 661 244z" fill="#e3e5f2"/>

              <!-- left blend -->
              <path d="M310 205C345 195 350 225 340 255C285 400 218 500 217 655C220 830 280 930 360 1028L318 1046C250 930 203 800 203 655C205 500 260 360 310 205z" fill="#e6e8f3"/>
              <path d="M217 760C240 880 290 960 358 1028L318 1046C260 960 225 860 208 760z" fill="#a3a5b4"/>
              <path class="ink" d="M310 205C345 195 350 225 340 255C285 400 218 500 217 655C220 830 280 930 360 1028L342 1024L318 1046C250 930 203 800 203 655C205 500 250 400 300 250" fill="none"/>

              <!-- left post -->
              <path class="ink" d="M124 220V650L134 1040C150 1085 290 1080 318 1044C250 930 203 800 203 655C205 500 262 370 308 235V215z" fill="url(#p-post)"/>
              <path d="M134 1036C160 1060 290 1060 316 1044C290 1082 150 1084 134 1036z" fill="#8f91a2"/>
              <path class="ink" d="M134 1036C160 1060 290 1060 316 1044" fill="none"/>
              <path class="ink seam" d="M124 636C150 650 180 657 215 657L475 778"/>
              <path class="ink" d="M124 225C125 175 305 175 308 225C300 262 140 262 124 225z" fill="#ebecf7"/>
              <ellipse class="ink" cx="220" cy="208" rx="78" ry="19" fill="#abadbd"/>
              <ellipse class="ink" cx="219" cy="206" rx="50" ry="14" fill="#d4d6e4"/>

              <!-- rim of the front face -->
              <path class="ink" d="M700 368L808 409C825 412 832 430 829 446C750 510 682 650 678 830C676 900 682 950 690 1000L650 995L592 965C560 900 552 830 565 720C590 590 640 480 700 368z" fill="url(#p-rim)"/>
              <path class="ink" d="M806 409C720 500 640 660 636 858C636 910 642 960 652 994M829 446L806 409" fill="none"/>
              <path class="ink" d="M660 360C705 355 705 400 690 430C610 600 560 700 565 824C565 880 575 930 592 980L612 1038L590 1020C560 960 550 880 551 800C560 660 610 520 655 380z" fill="#e6e8f3"/>
              <ellipse class="ink" cx="684" cy="516" rx="20" ry="34" transform="rotate(17 684 516)" fill="#e1e3f1"/>

              <!-- lower pocket -->
              <path class="ink" d="M615 990L690 1002L800 975L808 1218L826 1250L664 1190L655 1215L618 1236z" fill="url(#p-post)"/>
              <path class="ink" d="M655 1215C655 1170 670 1155 695 1168L806 1216L826 1250C780 1240 730 1210 690 1188C672 1185 665 1200 655 1215z" fill="#777987"/>
              <path class="ink" d="M785 990L786 1215M780 1092L804 1092M592 965L600 1010L617 1036M572 968L600 970" fill="none"/>

              <!-- front face -->
              <path class="ink" d="M829 446L1225 386L1245 396L1256 636L1378 614C1390 660 1396 710 1397 750C1392 900 1330 1050 1225 1165L830 1226L806 1216L798 976L690 1000C680 940 676 890 678 830C682 650 750 510 829 446z" fill="url(#p-front)"/>
              <path class="ink" d="M830 1226L1225 1165L1224 1190L826 1252L806 1216z" fill="#878998"/>
              <path class="ink" d="M1225 1165C1330 1050 1390 900 1386 750L1397 750C1396 900 1340 1060 1224 1190z" fill="#a0a2b2"/>
              <path class="ink" d="M1256 636L1262 570L1300 574L1370 592L1382 604L1378 614z" fill="#c3c5d4"/>
              <path class="ink" d="M1262 584C1290 578 1318 588 1316 600C1300 612 1275 610 1262 604zM1266 620L1378 598" fill="#eff0f9"/>
              <path class="ink" d="M690 1000L694 988L800 975" fill="none"/>

              <!-- bore -->
              <ellipse class="ink" cx="1030" cy="804" rx="168" ry="221" fill="#a9abba"/>
              <path d="M1085 592C1230 680 1230 940 1075 1020C1030 1028 970 1020 945 1005C1080 1010 1150 900 1157 760C1155 690 1130 640 1085 592z" fill="url(#p-bore)"/>
              <path class="ink" d="M1080 590C1130 640 1157 690 1157 761C1152 900 1080 1010 945 1005" fill="none"/>
              <ellipse cx="988" cy="785" rx="127" ry="167" fill="#a8aab9"/>
              <path d="M1012 620C1090 680 1070 860 985 905C960 922 930 928 912 925C950 965 1020 960 1060 920C1135 850 1130 690 1050 632z" fill="url(#p-bore)"/>
              <path d="M975 625L1012 622C1055 660 1070 740 1050 800L1034 835L978 900z" fill="#e3e4f5"/>
              <path class="ink" d="M975 625L978 893L1008 880L1034 835C1000 780 980 700 977 650" fill="none"/>
              <path d="M906 684C908 730 890 780 863 800C865 750 880 710 906 684zM978 815L1000 882L985 900z" fill="#fbfbff"/>
              <path class="ink" d="M906 684C908 730 890 780 863 800M978 820L1000 882M978 640C985 720 1005 790 1038 838" fill="none"/>
              <path class="ink" d="M920 645C960 615 1010 610 1050 634C1135 690 1135 850 1060 922C1010 965 950 960 912 925C960 928 1000 905 1034 860C1075 790 1070 670 1012 622M862 830C866 880 885 910 912 925" fill="none"/>
              <path class="ink seam" d="M565 824L634 858L678 862L862 832M1198 779L1397 748M906 684L972 676M1060 740L1115 766L1157 761L1198 779"/>
              <ellipse class="ink" cx="1030" cy="804" rx="168" ry="221" fill="none"/>

              <!-- front post -->
              <path class="ink" d="M473 390V800L484 1210C500 1248 590 1246 618 1232L622 1036L590 1020C560 960 550 880 551 800C560 660 610 520 655 390z" fill="url(#p-post)"/>
              <path d="M484 1208C510 1224 590 1224 618 1216L656 1208L655 1220L618 1236C580 1246 500 1246 484 1208z" fill="#8c8e9f"/>
              <path class="ink" d="M484 1208C510 1224 590 1224 618 1216M620 1036L618 1216" fill="none"/>
              <path class="ink seam" d="M473 802C490 815 530 824 565 824"/>
              <path class="ink" d="M473 395C470 335 650 340 656 390C650 430 490 430 473 395z" fill="#ebecf7"/>
              <ellipse class="ink" cx="568" cy="374" rx="78" ry="20" fill="#abadbd"/>
              <ellipse class="ink" cx="567" cy="373" rx="50" ry="14" fill="#d4d6e4"/>
            </svg>

            <svg class="axes" width="150" height="42">
              <rect x="6.500" y="21.500" width="98" height="7" fill="#333" stroke="#222"/>
              <path d="M7 23.500h97" stroke="#fff" stroke-width="3"/>
              <path d="M26 5L8 7" stroke="#00c814" stroke-width="2"/>
              <path d="M26 5l9 4" stroke="#d00" stroke-width="2"/>
              <path d="M26 5v20" stroke="#00b" stroke-width="2"/>
              <text x="1" y="13" fill="#0a8a14">Y</text>
              <text x="33" y="15" fill="#a11">X</text>
              <text x="23" y="34" fill="#118">Z</text>
              <text x="108" y="27" fill="#222">25 mm</text>
            </svg>
          </div>
          <div class="side">
            <button>
              <svg width="14" height="14"><path d="M2 12V5l3-1 2-3h4l3 4v7z" fill="#5db82c"/><path d="M2 12V5l3-1v8z" fill="#d93a20"/><path d="M5 4l2-3h2v11H5z" fill="#f7d619"/><path d="M1 0v13h13" stroke="#111" stroke-width="2" fill="none"/></svg>
              <span>Doğruluk Çözümleyici(TM)</span>
            </button>
            <i></i>
          </div>
        </div>
        <div class="sheets">
          <button class="nav" aria-label="Önceki"><svg width="6" height="9"><path d="M5 1v7L1 4.500z" fill="none" stroke="#555"/></svg></button>
          <button class="model">Model Görünümü</button>
          <button class="support">Destek</button>
          <div class="sheets-right">
            <button aria-label="Sonraki"><svg width="6" height="9"><path d="M1 1v7l4-3.500z" fill="none" stroke="#555"/></svg></button>
            <button aria-label="Kapat"><svg width="8" height="8"><path d="M0 0l8 8M8 0L0 8" stroke="#555" stroke-width="1.500"/></svg></button>
            <button class="box" aria-label="Git"><svg width="9" height="9"><path d="M0 2h4V0l5 4.500L4 9V7H0z" fill="#333"/></svg></button>
            <button class="box" aria-label="Liste"><svg width="9" height="5"><path d="M0 0h9L4.500 5z" fill="#333"/></svg></button>
          </div>
        </div>
      </main>
    </div>

    <div class="toolbar">
      <div class="strip filters">
        <span class="grip"></span>
        <button aria-label="Sığdır"><svg class="i16"><use href="#m-fit"/></svg></button>
        <select aria-label="Filtre"><option>Otomatik</option></select>
        <select aria-label="Seçim"><option>Otomatik</option></select>
        <span class="grip"></span>
        <button class="on" aria-label="Ağlar"><svg class="i18"><use href="#e-mesh"/></svg></button>
        <button aria-label="Bölgeler"><svg class="i18"><use href="#e-reg"/></svg></button>
        <button class="on" aria-label="Nokta bulutları"><svg class="i18"><use href="#e-cloud"/></svg></button>
        <button class="on" aria-label="Yüzeyler"><svg class="i18"><use href="#e-surf"/></svg></button>
        <button class="on" aria-label="Gövdeler"><svg class="i18"><use href="#e-body"/></svg></button>
        <button aria-label="Çizimler"><svg class="i18"><use href="#e-sk"/></svg></button>
        <button class="on" aria-label="3B çizimler"><svg class="i18"><use href="#e-sk3"/></svg></button>
        <button class="on" aria-label="Noktalar"><svg class="i18"><use href="#e-pt"/></svg></button>
        <button class="on" aria-label="Vektörler"><svg class="i18"><use href="#e-line"/></svg></button>
        <button aria-label="Düzlemler"><svg class="i18"><use href="#e-plane"/></svg></button>
        <button class="on" aria-label="Eğriler"><svg class="i18"><use href="#e-curve"/></svg></button>
        <button class="on" aria-label="Koordinatlar"><svg class="i18"><use href="#e-ax"/></svg></button>
        <button class="on" aria-label="Ölçüler"><svg class="i18"><use href="#e-dim"/></svg></button>
        <button class="drop" aria-label="Diğer"></button>
      </div>
      <div class="strip empty"><span class="grip"></span><button class="drop" aria-label="Diğer"></button></div>
      <div class="strip measure">
        <span class="grip"></span>
        <button aria-label="Mesafe"><svg class="i16"><use href="#m-dim"/></svg></button>
        <button aria-label="Açı"><svg class="i16"><use href="#m-ang"/></svg></button>
        <button aria-label="Yarıçap"><svg class="i16"><use href="#m-rad"/></svg></button>
        <button aria-label="Kesit"><svg class="i16"><use href="#m-sec"/></svg></button>
        <button aria-label="Sapma"><svg class="i18"><use href="#m-dev"/></svg></button>
        <button class="drop" aria-label="Diğer"></button>
      </div>
    </div>

    <footer class="status">
      <span>Hazır</span>
      <div class="status-right">
        <span class="timer">0: 0: 2.16<button aria-label="Süre"></button></span>
        <span class="meter"></span>
        <span class="lamp"></span>
      </div>
    </footer>

    <div class="taskbar">
      <button class="sys" aria-label="Başlat"><svg class="i16"><use href="#k-win"/></svg></button>
      <button class="sys" aria-label="Ara"><svg class="i16"><use href="#k-search"/></svg></button>
      <button class="sys" aria-label="Görev görünümü"><svg class="i16"><use href="#k-task"/></svg></button>
      <button class="app-btn" aria-label="Edge"><svg class="i24"><use href="#k-edge"/></svg></button>
      <button class="app-btn run" aria-label="Dosya Gezgini"><svg class="i24"><use href="#k-files"/></svg></button>
      <button class="app-btn" aria-label="Mağaza"><svg class="i24"><use href="#k-store"/></svg></button>
      <button class="app-btn" aria-label="Posta"><svg class="i24"><use href="#k-mail"/></svg></button>
      <button class="app-btn run" aria-label="Chrome"><svg class="i24"><use href="#k-chrome"/></svg></button>
      <button class="app-btn" aria-label="Hesap Makinesi"><svg class="i24"><use href="#k-calc"/></svg></button>
      <button class="app-btn run current"><svg class="i24"><use href="#k-dx"/></svg><b>Dx</b></button>
      <button class="app-btn run" aria-label="Ağ"><svg class="i24"><use href="#k-globe"/></svg></button>
      <div class="tray">
        <button class="stock"><svg class="i24"><use href="#k-stock"/></svg>XU100 Endeksi <em>+%4,...</em></button>
        <button aria-label="Gizli simgeler"><svg width="12" height="8"><path d="M1 7l5-5 5 5" fill="none" stroke="#111" stroke-width="1.200"/></svg></button>
        <button aria-label="Kamera"><svg width="14" height="16"><rect x="2" y="4" width="7" height="8" rx="1" fill="none" stroke="#111"/><path d="M9 7l3-2v6l-3-2M3 1.500c2-1 4-1 6 0M3 14.500c2 1 4 1 6 0" fill="none" stroke="#111"/></svg></button>
        <button aria-label="Güncelleme"><svg width="17" height="16"><path d="M1 3l15-2v13l-15-1zM5 8c0-4 5-4 6-1M11 4v3H8M11 8c0 4-5 4-6 1" fill="none" stroke="#111"/><circle cx="12.500" cy="12.500" r="3.500" fill="#f7941d"/></svg></button>
        <button aria-label="Wi-Fi"><svg width="14" height="14"><path d="M1 13C1 6 6 1 13 1M4 13c0-5 4-9 9-9M7 13c0-3 3-6 6-6M10 13c0-2 1-3 3-3" fill="none" stroke="#111"/><circle cx="12" cy="12" r="1.500"/></svg></button>
        <button aria-label="Ses"><svg width="16" height="14"><path d="M1 5h3l4-4v12L4 9H1zM10 5c1 1 1 3 0 4M12 3c2 2 2 6 0 8M14 1c3 3 3 9 0 12" fill="none" stroke="#111"/></svg></button>
        <time>17:34<br>12.01.2023</time>
        <button class="notes" aria-label="Bildirimler"><svg width="16" height="16"><path d="M.5 1h15v11H11l-3 3-3-3H.5z" fill="none" stroke="#111" stroke-width="1.200"/></svg></button>
      </div>
    </div>
  </div>
</body>
</html>
```
FILE: styles.css
```
* {
  box-sizing: border-box;
}
body {
  margin: 0;
  background: #f0f0f0;
  color: #222;
  font-family: "Noto Sans", "Open Sans", sans-serif;
  font-size: 11px;
}
button {
  border: 0;
  padding: 0;
  background: none;
  color: inherit;
  font: inherit;
}
h1, h2, ul {
  margin: 0;
  padding: 0;
  font-weight: normal;
}
svg {
  display: block;
  flex: none;
}
.sheet {
  position: absolute;
  width: 0;
  height: 0;
}
.i14 { width: 14px; height: 14px; }
.i16 { width: 16px; height: 16px; }
.i18 { width: 18px; height: 18px; }
.i24 { width: 24px; height: 24px; }

.app {
  display: flex;
  flex-direction: column;
  height: 100vh;
  overflow: hidden;
}

/* title bar */
.titlebar {
  position: relative;
  display: grid;
  grid-template-columns: 1fr auto 1fr;
  align-items: center;
  height: 24px;
}
.titlebar h1 {
  padding-left: 112px;
  color: #444;
  font-size: 11px;
}
.quick {
  display: flex;
  align-items: center;
  padding: 0 2px;
  gap: 6px;
}
.quick .more {
  margin-left: 2px;
}
.dx-logo {
  position: relative;
  margin-right: 4px;
}
.dx-logo b {
  position: absolute;
  inset: 0;
  color: #fff;
  font-size: 10px;
  line-height: 16px;
  text-align: center;
}
.win-buttons {
  display: flex;
  justify-content: flex-end;
  gap: 26px;
  padding-right: 13px;
}
.loading {
  position: absolute;
  top: 0;
  left: 840px;
  width: 241px;
  height: 1px;
  background: #e4e4e4;
}
.loading i {
  display: block;
  width: 48px;
  height: 1px;
  background: #2aa5ab;
}

/* ribbon tabs */
.tabs {
  display: flex;
  height: 22px;
  margin-top: 2px;
  border-bottom: 1px solid #c2c2c2;
}
.tabs button {
  padding: 0 14px;
}
.tabs .menu {
  width: 56px;
  margin-right: 3px;
  background: #c82a2b;
  color: #fff;
}
.tabs .active {
  margin-bottom: -1px;
  border: 1px solid #c2c2c2;
  border-bottom: 0;
  background: #fbfbfb;
  color: #a3202b;
}
.tabs .active ~ button {
  margin-left: -1px;
}

/* ribbon */
.ribbon {
  display: flex;
  height: 92px;
  padding-left: 1px;
  border-bottom: 1px solid #7f838a;
  background: linear-gradient(#fbfbfb 71px, #c2c2c2 71px, #c2c2c2 72px, #e8e8e8 72px);
}
.group {
  display: flex;
  flex-direction: column;
  margin: 2px 0 3px;
  border-right: 1px solid #c2c2c2;
}
.group h2 {
  margin-top: auto;
  font-size: 11px;
  line-height: 16px;
  text-align: center;
}
.tools {
  display: flex;
  height: 68px;
  padding-left: 5px;
}
.group.five { width: 225px; }
.group.wizard { width: 139px; }
.group.refgeo { width: 147px; }
.group.edit { width: 540px; }
.group.pattern { width: 79px; }
.group.bodyface { width: 230px; }
.five .tools { padding-left: 6px; }
.refgeo .tools { padding-left: 16px; }
.edit .tools { padding-left: 3px; }
.pattern .tools { padding-left: 4px; }
.bodyface .tools { padding-left: 4px; }
.big {
  display: flex;
  flex-direction: column;
  align-items: center;
  flex: none;
  width: 43px;
  padding-top: 4px;
  line-height: 13px;
  white-space: nowrap;
}
.big svg {
  width: 32px;
  height: 32px;
  margin-bottom: 4px;
}
.big.wide { width: 50px; }
.edit .big { width: 45px; }
.edit .sep {
  width: 48px;
  padding-left: 4px;
  border-left: 1px solid #c2c2c2;
}
.smalls {
  display: flex;
  flex-direction: column;
  padding: 1px 0 0 4px;
}
.smalls button {
  display: flex;
  align-items: center;
  gap: 3px;
  height: 22px;
  white-space: nowrap;
}
.smalls svg {
  width: 16px;
  height: 16px;
}
.refgeo .smalls { padding-left: 3px; }
.edit .smalls { padding-left: 4px; }
.edit .col-a { width: 60px; }
.edit .col-b { width: 112px; padding-left: 2px; }
.bodyface .col-c { width: 119px; }

/* work area */
.work {
  display: flex;
  flex: 1;
  min-height: 0;
}
.help {
  display: flex;
  flex-direction: column;
  width: 229px;
  margin-right: 4px;
  font-family: Roboto, "Liberation Sans", sans-serif;
}
.help-title {
  display: flex;
  align-items: center;
  gap: 11px;
  height: 21px;
  padding: 0 7px 0 4px;
  background: #909496;
  color: #fff;
  font-family: "Noto Sans", sans-serif;
}
.help-title span {
  flex: 1;
}
.help-tabs {
  display: flex;
  align-items: flex-end;
  height: 22px;
}
.help-tabs button {
  display: flex;
  align-items: center;
  gap: 7px;
  height: 17px;
  padding: 0 4px 0 6px;
  border: 1px solid #d4d4d4;
  border-bottom: 0;
}
.help-tabs .on {
  height: 19px;
  padding: 0 7px 0 9px;
  background: #fff;
}
.tree {
  flex: 1;
  border: 1px solid #c2c2c2;
  border-width: 1px 1px 0;
  background: #fff;
  list-style: none;
  overflow: hidden;
}
.tree li {
  display: flex;
  align-items: center;
  height: 17px;
  padding-left: 7px;
  background:
    repeating-linear-gradient(#999 0 1px, transparent 1px 2px) 11px 0 / 1px 100% no-repeat,
    repeating-linear-gradient(90deg, #999 0 1px, transparent 1px 2px) 12px 8px / 12px 1px no-repeat;
}
.tree li:last-child {
  background-size: 1px 9px, 12px 1px;
}
.tree i {
  flex: none;
  width: 9px;
  height: 9px;
  border: 1px solid #848484;
  background: #fff;
  color: #235;
  font: 9px/7px "Liberation Sans", sans-serif;
  text-align: center;
}
.tree svg {
  margin-left: 8px;
}
.tree .leaf svg {
  margin-left: 17px;
}
.tree a {
  margin-left: 3px;
  padding: 0 2px;
  color: #222;
  line-height: 16px;
  text-decoration: none;
  white-space: nowrap;
}
.tree .open a {
  background: #e6e6e6;
}
.hscroll {
  display: flex;
  height: 18px;
  border: 1px solid #c2c2c2;
  border-top: 0;
  background: #f0f0f0;
}
.hscroll button {
  display: flex;
  align-items: center;
  justify-content: center;
  width: 18px;
}
.hscroll .thumb {
  flex: 1;
  border: 1px solid #dadada;
  background: #f8f8f8;
}
.hscroll .track {
  width: 22px;
  background: #e4e4e4;
}

.stage {
  display: flex;
  flex: 1;
  flex-direction: column;
  min-width: 0;
}
.stage-row {
  display: flex;
  flex: 1;
  border-bottom: 1px solid #fff;
}
.viewport {
  position: relative;
  flex: 1;
  background: #b3b3b3;
}
.viewbar {
  display: flex;
  align-items: center;
  width: max-content;
  height: 28px;
  margin: 0 auto;
  padding: 0 3px;
  border: 1px solid #7f858c;
  border-top: 0;
  background: #cfd4d8;
}
.viewbar button, .strip button {
  display: flex;
  align-items: center;
  justify-content: center;
  width: 24px;
  height: 22px;
  margin: 0 1px;
}
.viewbar .on, .strip .on {
  background: #e2a5a7;
}
.viewbar .drop, .strip .drop {
  align-items: flex-end;
  width: 9px;
}
.drop::after {
  content: "";
  margin-bottom: 4px;
  border: 3px solid transparent;
  border-top-color: #555;
  border-bottom: 0;
}
.viewbar .bar {
  width: 1px;
  height: 22px;
  margin: 0 4px 0 3px;
  background: #b9bec3;
}
.corner {
  position: absolute;
  top: 4px;
  right: 4px;
}
.part {
  position: absolute;
  left: 417px;
  top: 210px;
  width: 620px;
  height: 440px;
}
.ink {
  stroke: #1b1b20;
  stroke-width: 1;
}
.seam {
  fill: none;
  stroke-width: 1.5;
}
.part * {
  vector-effect: non-scaling-stroke;
}
.axes {
  position: absolute;
  left: 13px;
  bottom: 2px;
  font: 12px Roboto, "Liberation Sans", sans-serif;
}
.side {
  display: flex;
  justify-content: space-between;
  width: 32px;
  padding-top: 7px;
  border-left: 2px solid #fff;
}
.side button {
  display: flex;
  flex-direction: column;
  align-items: center;
  gap: 3px;
  height: 164px;
  padding-left: 4px;
  font-size: 12px;
  white-space: nowrap;
}
.side span {
  writing-mode: vertical-rl;
}
.side i {
  width: 6px;
  height: 164px;
  background: #c8c8c8;
}

.sheets {
  display: flex;
  align-items: center;
  height: 18px;
  padding: 0 3px;
}
.sheets .nav {
  width: 11px;
}
.sheets .model, .sheets .support {
  height: 17px;
  padding: 0 18px 0 12px;
  background: #d6e6ff;
  clip-path: polygon(0 0, 100% 0, calc(100% - 8px) 100%, 8px 100%);
  color: #111;
}
.sheets .support {
  margin-left: -4px;
  padding: 0 20px 0 8px;
  background: #fff07c;
  clip-path: polygon(4px 0, 100% 0, calc(100% - 9px) 100%, 4px 100%, 0 60%);
}
.sheets-right {
  display: flex;
  align-items: center;
  gap: 11px;
  margin-left: auto;
  padding-right: 33px;
}
.sheets-right .box {
  display: flex;
  align-items: center;
  justify-content: center;
  width: 15px;
  height: 15px;
  margin-left: -4px;
  border: 1px solid #c2c2c2;
  background: #fff;
}
.sheets-right .box + .box {
  margin-left: -8px;
}

/* bottom toolbar */
.toolbar {
  display: flex;
  height: 28px;
}
.strip {
  display: flex;
  align-items: center;
}
.grip {
  width: 2px;
  height: 18px;
  margin: 0 4px;
  background: repeating-linear-gradient(#bbb 0 2px, transparent 2px 4px);
}
.strip select {
  width: 46px;
  height: 22px;
  margin-right: 4px;
  padding: 0 14px 0 4px;
  border: 1px solid #a6abb4;
  border-radius: 0;
  appearance: none;
  background: #f3f3f3 conic-gradient(from 315deg at 50% 100%, #999 90deg, transparent 0) 34px 10px / 6px 3px no-repeat;
  color: #6d6d6d;
  font: 12px "Noto Sans", sans-serif;
  overflow: hidden;
}
.strip select + select {
  background-color: #fff;
}
.strip.filters {
  width: 511px;
}
.filters > button:first-of-type {
  margin: 0 3px 0 1px;
}
.strip.empty {
  width: 385px;
}
.empty .drop {
  margin-left: 15px;
}

/* status bar */
.status {
  display: flex;
  align-items: center;
  justify-content: space-between;
  height: 19px;
  padding: 0 11px 0 15px;
  background: #909496;
  color: #fff;
}
.status-right {
  display: flex;
  align-items: center;
  gap: 4px;
}
.timer {
  display: flex;
  align-items: center;
  justify-content: flex-end;
  gap: 4px;
  width: 75px;
  height: 15px;
  border: 1px solid #a5a8aa;
  font: 12px Roboto, "Liberation Sans", sans-serif;
}
.timer button {
  width: 10px;
  height: 13px;
  background: #f0f0f0;
}
.meter {
  width: 31px;
  height: 13px;
  border: 1px solid #444;
  border-left: 3px solid #165c1c;
  background: #000;
}
.lamp {
  width: 13px;
  height: 13px;
  background: linear-gradient(135deg, #3fae4c 50%, #24762d);
}

/* windows taskbar */
.taskbar {
  display: flex;
  height: 40px;
  background: linear-gradient(90deg, #d3e4ea, #dbe6ea 60%, #cfdfe9);
}
.taskbar button {
  display: flex;
  align-items: center;
  justify-content: center;
}
.taskbar .sys {
  width: 48px;
}
.taskbar .app-btn {
  position: relative;
  width: 49px;
}
.sys + .app-btn {
  margin-left: 2px;
}
.app-btn.run::after {
  content: "";
  position: absolute;
  right: 4px;
  bottom: 0;
  left: 4px;
  height: 2px;
  background: #10a3b4;
}
.app-btn.current {
  background: #eef5f8;
}
.app-btn.current::after {
  right: 0;
  left: 0;
}
.app-btn b {
  position: absolute;
  color: #fff;
  font-size: 14px;
}
.tray {
  display: flex;
  align-items: center;
  margin-left: auto;
  padding-right: 13px;
  color: #111;
}
.tray button {
  width: 24px;
  height: 40px;
}
.tray .stock {
  gap: 8px;
  width: auto;
  margin-right: 10px;
  font-size: 14px;
  font-family: "Open Sans", "Noto Sans", sans-serif;
}
.stock em {
  color: #1a8a1a;
  font-style: normal;
}
.tray time {
  width: 66px;
  font-size: 11px;
  line-height: 18px;
  text-align: center;
}
.tray .notes {
  width: 40px;
  background: #dae8ef;
}
```
